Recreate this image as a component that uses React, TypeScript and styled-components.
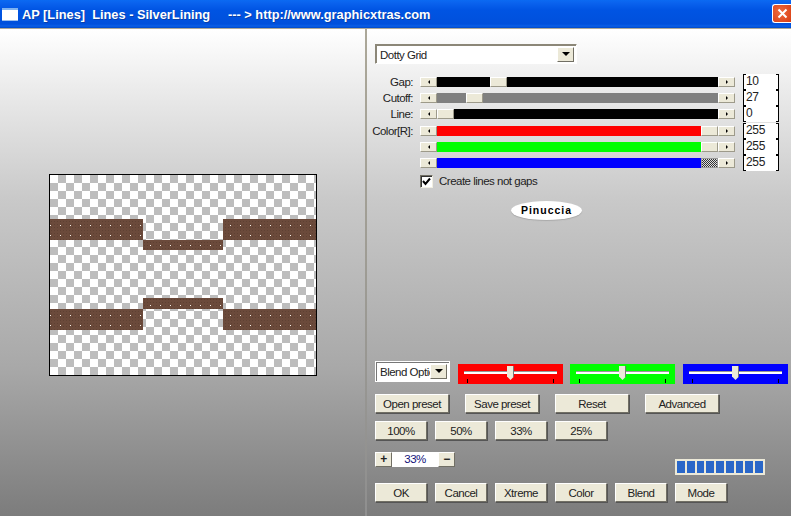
import styled, { createGlobalStyle } from "styled-components";

const GlobalStyle = createGlobalStyle`
  html, body {
    margin: 0;
    padding: 0;
    background: #777;
  }
  * {
    box-sizing: border-box;
  }
`;

const Window = styled.div`
  width: 791px;
  height: 516px;
  display: flex;
  flex-direction: column;
  overflow: hidden;
  font-family: "Liberation Sans", Arial, sans-serif;
  font-size: 11.5px;
  letter-spacing: -0.5px;
  color: #222;
`;

const TitleBar = styled.div`
  height: 28px;
  flex: none;
  display: flex;
  align-items: center;
  background: linear-gradient(#0b6af2 0, #0a62ee 3px, #0054e3 10px, #0050dc 24px, #0a5fe8 26px, #0048c8 28px);
  padding: 0 0 0 2px;
`;

const TitleText = styled.span`
  margin-left: 4px;
  color: #fff;
  font-size: 12.8px;
  font-weight: bold;
  letter-spacing: 0;
  white-space: pre;
  text-shadow: 1px 1px 0 #0a3fa8;
  flex: 1;
`;

const CloseButton = styled.div`
  width: 19px;
  height: 19px;
  margin-top: -1px;
  border: 1px solid #fff;
  border-right: none;
  border-radius: 3px 0 0 3px;
  background: radial-gradient(circle at 40% 40%, #ee6a3e, #d83c12);
  display: flex;
  align-items: center;
  justify-content: center;
`;

const Body = styled.div`
  flex: 1;
  display: flex;
  border-top: 1px solid #aca899;
  background: linear-gradient(#ffffff 0, #e8e8e8 70px, #c9c9c9 170px, #a8a8a8 340px, #7c7c7c 100%);
`;

const PreviewPane = styled.div`
  width: 365px;
  flex: none;
  padding: 145px 0 0 49px;
`;

const PreviewFrame = styled.div`
  width: 268px;
  height: 202px;
  border: 1px solid #000;
  line-height: 0;
`;

const Divider = styled.div`
  width: 2px;
  flex: none;
  background: linear-gradient(#aca899, #8f8f8f);
`;

const ControlPane = styled.div`
  flex: 1;
  padding: 15px 0 0 8px;
  display: flex;
  flex-direction: column;
  align-items: flex-start;
`;

const Combo = styled.div<{ $width: number; $height: number; $plain?: boolean }>`
  width: ${(p) => p.$width}px;
  height: ${(p) => p.$height}px;
  background: #fff;
  border: 1px solid;
  border-color: ${(p) => (p.$plain ? "#fff" : "#8c8778 #fff #fff #8c8778")};
  box-shadow: ${(p) => (p.$plain ? "inset 1px 1px 0 #777" : "inset 1px 1px 0 #8c8778")};
  display: flex;
  align-items: center;
  padding: 0 2px 0 4px;
`;

const ComboText = styled.div`
  flex: 1;
  min-width: 0;
  padding-top: 1px;
  overflow: hidden;
  white-space: nowrap;
`;

const ComboArrow = styled.div`
  width: 17px;
  height: 15px;
  flex: none;
  background: #ece9d8;
  border: 1px solid;
  border-color: #fff #716f64 #716f64 #fff;
  display: flex;
  align-items: center;
  justify-content: center;
  &::after {
    content: "";
    border: 4px solid transparent;
    border-top: 4px solid #000;
    border-bottom: none;
  }
`;

const SliderArea = styled.div`
  margin-top: 10px;
  display: flex;
`;

const SliderList = styled.div`
  width: 360px;
  padding-top: 3px;
  display: flex;
  flex-direction: column;
`;

const SliderRows = styled.div`
  display: flex;
  flex-direction: column;
  gap: 6.2px;
`;

const SliderRow = styled.div`
  height: 10px;
  display: flex;
  align-items: center;
`;

const RowLabel = styled.div`
  width: 38px;
  margin-right: 7px;
  flex: none;
  display: flex;
  justify-content: flex-end;
  white-space: nowrap;
`;

const ArrowButton = styled.div<{ $dir: "left" | "right" }>`
  width: 17px;
  height: 10px;
  flex: none;
  background: #ece9d8;
  border: 1px solid;
  border-color: #fff #9d9a8a #9d9a8a #fff;
  display: flex;
  align-items: center;
  justify-content: center;
  &::after {
    content: "";
    border: 2px solid transparent;
    ${(p) => (p.$dir === "left" ? "border-right: 2px solid #000; border-left: none;" : "border-left: 2px solid #000; border-right: none;")}
  }
`;

const Track = styled.div<{ $color: string }>`
  width: 281px;
  height: 10px;
  flex: none;
  position: relative;
  background: ${(p) => p.$color};
`;

const Thumb = styled.div<{ $left: number; $hatched?: boolean }>`
  position: absolute;
  top: 0;
  left: ${(p) => p.$left}px;
  width: 17px;
  height: 10px;
  background: ${(p) =>
    p.$hatched
      ? "repeating-conic-gradient(#333 0 25%, #ddd 0 50%) 0 0 / 2px 2px"
      : "#ece9d8"};
  border: 1px solid;
  border-color: ${(p) => (p.$hatched ? "#999" : "#fff #9d9a8a #9d9a8a #fff")};
`;

const CheckRow = styled.label`
  margin: 7px 0 0 45px;
  height: 13px;
  display: flex;
  align-items: center;
  gap: 6px;
`;

const CheckBox = styled.div`
  width: 13px;
  height: 13px;
  background: #fff;
  border: 1px solid;
  border-color: #716f64 #f1efe2 #f1efe2 #716f64;
  box-shadow: inset 1px 1px 0 #333;
  line-height: 0;
`;

const ValueColumn = styled.div`
  margin-left: 8px;
  display: flex;
  flex-direction: column;
  gap: 0.2px;
`;

const ValueBox = styled.div`
  width: 36px;
  height: 16px;
  border-left: 1px solid #000;
  border-right: 1px solid #000;
  background:
    linear-gradient(#000, #000) 0 0 / 2px 1px no-repeat,
    linear-gradient(#000, #000) 100% 0 / 2px 1px no-repeat,
    linear-gradient(#000, #000) 0 100% / 2px 1px no-repeat,
    linear-gradient(#000, #000) 100% 100% / 2px 1px no-repeat,
    #fff;
  padding-left: 2px;
  font-size: 12px;
  letter-spacing: -0.3px;
  line-height: 15px;
`;

const Logo = styled.div`
  margin: 13px 0 0 136px;
  width: 71px;
  height: 19px;
  border-radius: 50%;
  background: #fff;
  box-shadow: 0 1px 1px #aaa;
  display: flex;
  align-items: center;
  justify-content: center;
  font-size: 10.5px;
  font-weight: bold;
  letter-spacing: 1px;
  color: #000;
`;

const BlendRow = styled.div`
  margin-top: 141px;
  display: flex;
  align-items: flex-start;
`;

const ColorPanel = styled.div<{ $color: string; $gap: number }>`
  width: 105px;
  height: 20px;
  margin: 3px 0 0 ${(p) => p.$gap}px;
  background: ${(p) => p.$color};
  position: relative;
`;

const PanelGroove = styled.div`
  position: absolute;
  top: 7px;
  left: 6px;
  right: 6px;
  height: 3px;
  background: #fff;
  border-top: 1px solid #999;
`;

const PanelThumb = styled.div`
  position: absolute;
  top: 2px;
  left: 49px;
  width: 7px;
  height: 14px;
  background: #ece9d8;
  border-right: 1px solid #777;
  clip-path: polygon(0 0, 100% 0, 100% 75%, 50% 100%, 0 75%);
`;

const PanelTick = styled.div<{ $side: "left" | "right" }>`
  position: absolute;
  bottom: 1px;
  ${(p) => p.$side}: 9px;
  width: 1px;
  height: 4px;
  background: #000;
`;

const ButtonRow = styled.div<{ $top: number; $gap: number }>`
  margin-top: ${(p) => p.$top}px;
  display: flex;
  gap: ${(p) => p.$gap}px;
`;

const Button = styled.div<{ $width: number }>`
  width: ${(p) => p.$width}px;
  height: 19px;
  padding-top: 1px;
  background: #ece9d8;
  border: 1px solid;
  border-color: #fff #716f64 #716f64 #fff;
  box-shadow: 1px 1px 0 #555;
  display: flex;
  align-items: center;
  justify-content: center;
  white-space: nowrap;
`;

const ZoomRow = styled.div`
  margin-top: 12px;
  display: flex;
  align-items: flex-start;
`;

const ZoomButton = styled.div`
  width: 17px;
  height: 15px;
  background: #ece9d8;
  border: 1px solid;
  border-color: #fff #716f64 #716f64 #fff;
  display: flex;
  align-items: center;
  justify-content: center;
  font-size: 12px;
  font-weight: bold;
`;

const ZoomValue = styled.div`
  width: 46px;
  height: 15px;
  background: #fff;
  color: #10107a;
  text-align: center;
  line-height: 14px;
`;

const Progress = styled.div`
  margin: 7px 0 0 220px;
  width: 90px;
  height: 16px;
  padding: 2px 2px;
  background: #ece9d8;
  display: flex;
  gap: 2px;
`;

const ProgressBlock = styled.div`
  width: 8px;
  background: #2a67c8;
`;

const dotXs = (from: number, to: number) => {
  const xs: number[] = [];
  for (let x = from; x <= to; x += 10) xs.push(x);
  return xs;
};

// band rectangles and dot rows, in preview coordinates
const bands = [
  { x: 0, y: 44, w: 93, h: 21, rows: [50, 60], xs: dotXs(0, 90) },
  { x: 173, y: 44, w: 93, h: 21, rows: [50, 60], xs: dotXs(180, 260) },
  { x: 93, y: 65, w: 80, h: 10, rows: [70], xs: dotXs(100, 170) },
  { x: 93, y: 123, w: 80, h: 11, rows: [130], xs: dotXs(100, 170) },
  { x: 0, y: 134, w: 93, h: 21, rows: [140, 150], xs: dotXs(0, 90) },
  { x: 173, y: 134, w: 93, h: 21, rows: [140, 150], xs: dotXs(180, 260) },
];

function Preview() {
  return (
    <svg width="266" height="200" viewBox="0 0 266 200">
      <defs>
        <pattern id="checker" width="16" height="16" patternUnits="userSpaceOnUse">
          <rect width="16" height="16" fill="#fff" />
          <rect x="8" width="8" height="8" fill="#bdbdbd" />
          <rect y="8" width="8" height="8" fill="#bdbdbd" />
        </pattern>
        <pattern id="speckle" width="3" height="3" patternUnits="userSpaceOnUse">
          <rect width="3" height="3" fill="#6b4a3b" />
          <rect x="1" y="1" width="1" height="1" fill="#5f4133" />
        </pattern>
      </defs>
      <rect width="266" height="200" fill="url(#checker)" />
      {bands.map((b) => (
        <g key={`${b.x}-${b.y}`}>
          <rect x={b.x} y={b.y} width={b.w} height={b.h} fill="url(#speckle)" />
          {b.rows.map((y) =>
            b.xs.map((x) => <rect key={`${x}-${y}`} x={x} y={y} width="1" height="1" fill="#f5f0e8" />)
          )}
        </g>
      ))}
    </svg>
  );
}

const sliders = [
  { label: "Gap:", color: "#000", left: 53 },
  { label: "Cutoff:", color: "#808080", left: 29 },
  { label: "Line:", color: "#000", left: 0 },
  { label: "Color[R]:", color: "#f00", left: 264 },
  { label: "", color: "#0f0", left: 264 },
  { label: "", color: "#00f", left: 264, hatched: true },
];

const values = ["10", "27", "0", "255", "255", "255"];
const panels = [
  { color: "#f00", gap: 8 },
  { color: "#0f0", gap: 7 },
  { color: "#00f", gap: 8 },
];

export default function App() {
  return (
    <Window>
      <GlobalStyle />
      <TitleBar>
        <svg width="16" height="13" viewBox="0 0 16 13">
          <rect width="16" height="13" fill="#fff" />
          <rect x="0" y="0" width="16" height="2" fill="#7fb2f0" />
          <rect x="0" y="12" width="16" height="1" fill="#9cc0ee" />
        </svg>
        <TitleText>{"AP [Lines]  Lines - SilverLining     --- > http://www.graphicxtras.com"}</TitleText>
        <CloseButton>
          <svg width="11" height="11" viewBox="0 0 11 11">
            <path d="M1.5 1.5 L9.5 9.5 M9.5 1.5 L1.5 9.5" stroke="#fff" strokeWidth="2" />
          </svg>
        </CloseButton>
      </TitleBar>
      <Body>
        <PreviewPane>
          <PreviewFrame>
            <Preview />
          </PreviewFrame>
        </PreviewPane>
        <Divider />
        <ControlPane>
          <Combo $width={202} $height={20}>
            <ComboText>Dotty Grid</ComboText>
            <ComboArrow />
          </Combo>
          <SliderArea>
            <SliderList>
              <SliderRows>
                {sliders.map((s, i) => (
                  <SliderRow key={i}>
                    <RowLabel>{s.label}</RowLabel>
                    <ArrowButton $dir="left" />
                    <Track $color={s.color}>
                      <Thumb $left={s.left} $hatched={s.hatched} />
                    </Track>
                    <ArrowButton $dir="right" />
                  </SliderRow>
                ))}
              </SliderRows>
              <CheckRow>
                <CheckBox>
                  <svg width="11" height="11" viewBox="0 0 11 11">
                    <path d="M2 5 L4.5 8 L9 2.5" stroke="#000" strokeWidth="2" fill="none" />
                  </svg>
                </CheckBox>
                Create lines not gaps
              </CheckRow>
            </SliderList>
            <ValueColumn>
              {values.map((v, i) => (
                <ValueBox key={i}>{v}</ValueBox>
              ))}
            </ValueColumn>
          </SliderArea>
          <Logo>Pinuccia</Logo>
          <BlendRow>
            <Combo $width={75} $height={21} $plain>
              <ComboText>Blend Options</ComboText>
              <ComboArrow />
            </Combo>
            {panels.map((p) => (
              <ColorPanel key={p.color} $color={p.color} $gap={p.gap}>
                <PanelGroove />
                <PanelThumb />
                <PanelTick $side="left" />
                <PanelTick $side="right" />
              </ColorPanel>
            ))}
          </BlendRow>
          <ButtonRow $top={10} $gap={16}>
            <Button $width={74}>Open preset</Button>
            <Button $width={74}>Save preset</Button>
            <Button $width={74}>Reset</Button>
            <Button $width={74}>Advanced</Button>
          </ButtonRow>
          <ButtonRow $top={8} $gap={8}>
            <Button $width={52}>100%</Button>
            <Button $width={52}>50%</Button>
            <Button $width={52}>33%</Button>
            <Button $width={52}>25%</Button>
          </ButtonRow>
          <ZoomRow>
            <ZoomButton>+</ZoomButton>
            <ZoomValue>33%</ZoomValue>
            <ZoomButton>−</ZoomButton>
            <Progress>
              {Array.from({ length: 9 }, (_, i) => (
                <ProgressBlock key={i} />
              ))}
            </Progress>
          </ZoomRow>
          <ButtonRow $top={8} $gap={8}>
            <Button $width={52}>OK</Button>
            <Button $width={52}>Cancel</Button>
            <Button $width={52}>Xtreme</Button>
            <Button $width={52}>Color</Button>
            <Button $width={52}>Blend</Button>
            <Button $width={52}>Mode</Button>
          </ButtonRow>
        </ControlPane>
      </Body>
    </Window>
  );
}
